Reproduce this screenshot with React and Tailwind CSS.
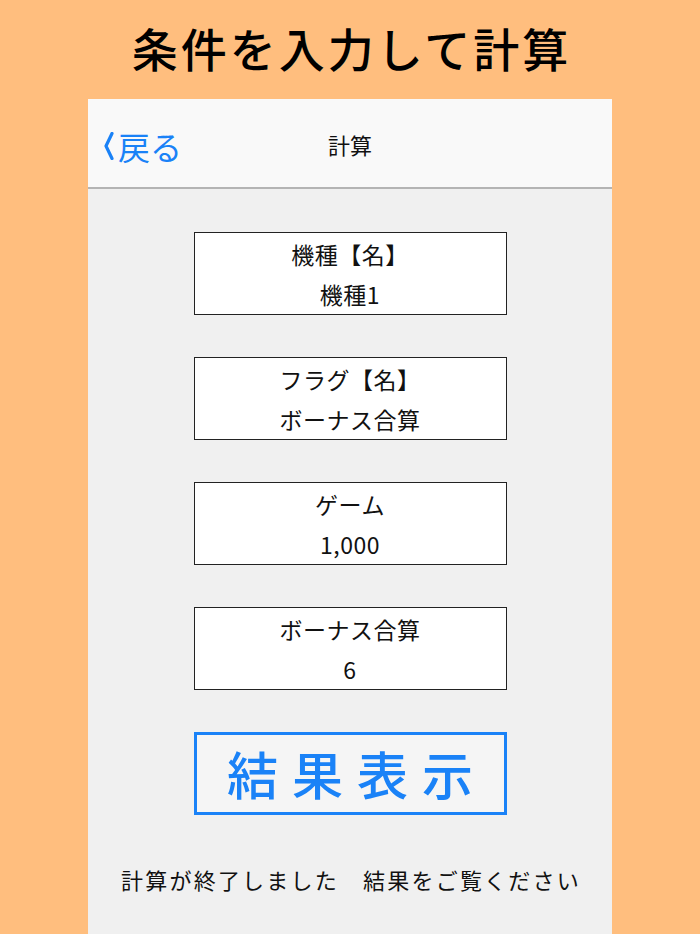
const fontStack = { fontFamily: '"Noto Sans CJK JP", "Noto Sans", sans-serif' }

const fields = [
  { label: '機種【名】', value: '機種1' },
  { label: 'フラグ【名】', value: 'ボーナス合算' },
  { label: 'ゲーム', value: '1,000' },
  { label: 'ボーナス合算', value: '6' },
]

function FieldBox({ label, value }) {
  return (
    <div className="flex h-[83px] w-[313px] flex-col items-center justify-center gap-[6px] border border-[#222] bg-white text-[23px] leading-[34px] tracking-[0.5px] text-[#111]">
      <span>{label}</span>
      <span>{value}</span>
    </div>
  )
}

export default function App() {
  return (
    <div
      className="flex h-[934px] w-[700px] flex-col items-center overflow-hidden bg-[#FFBE7E]"
      style={fontStack}
    >
      <h1 className="flex h-[99px] items-center justify-center pb-[6px] pl-[3px] text-[46px] font-medium leading-none tracking-[3px] text-black">
        条件を入力して計算
      </h1>

      <div className="flex w-[524px] flex-1 flex-col bg-[#F0F0F0]">
        <div className="relative flex h-[90px] items-center justify-center border-b-2 border-[#B4B4B4] bg-[#F9F9F9]">
          <div className="absolute left-[15px] top-[31px] flex items-center gap-[3px] text-[#1A82F7]">
            <svg width="12" height="28" viewBox="0 0 12 28" fill="none">
              <path d="M9 1.5 L3 14 L9 26.5" stroke="currentColor" strokeWidth="3.2" strokeLinecap="round" strokeLinejoin="round" />
            </svg>
            <span className="text-[32px] leading-none">戻る</span>
          </div>
          <span className="pt-[2px] text-[22px] text-[#111]">計算</span>
        </div>

        <div className="flex flex-col items-center pt-[43px]">
          <div className="flex flex-col items-center gap-[42px]">
            {fields.map((f) => (
              <FieldBox key={f.label} label={f.label} value={f.value} />
            ))}
          </div>

          <button className="mt-[42px] flex h-[83px] w-[313px] items-center justify-center border-[3px] border-[#1A82F7] bg-[#F5F5F5] pl-[14px] text-[51px] font-medium leading-none tracking-[14px] text-[#1A82F7]">
            結果表示
          </button>

          <p className="mt-[48px] pl-[2px] text-[22px] tracking-[2.2px] text-[#111]">
            計算が終了しました　結果をご覧ください
          </p>
        </div>
      </div>
    </div>
  )
}
